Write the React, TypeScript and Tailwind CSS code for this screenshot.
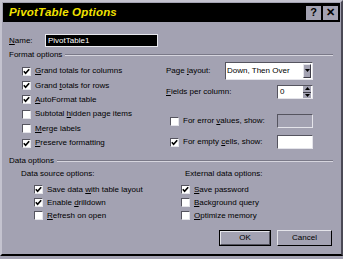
import React from "react";

function U({ children }: { children: React.ReactNode }) {
  return <span className="underline underline-offset-[1px]">{children}</span>;
}

function Box({ checked }: { checked?: boolean }) {
  return (
    <span className="flex h-[9px] w-[9px] shrink-0 items-center justify-center border-t border-l border-t-[#55545f] border-l-[#55545f] border-b border-r border-b-[#e4e4ea] border-r-[#e4e4ea] bg-white">
      {checked && (
        <svg width="7" height="7" viewBox="0 0 7 7">
          <path d="M0.8 3.2 L2.6 5.2 L6.2 1.2" fill="none" stroke="#000" strokeWidth="1.6" />
        </svg>
      )}
    </span>
  );
}

function Check({ checked, children, h = "h-[14.4px]" }: { checked?: boolean; children: React.ReactNode; h?: string }) {
  return (
    <div className={`flex items-center gap-[4px] ${h}`}>
      <Box checked={checked} />
      <span>{children}</span>
    </div>
  );
}

function Sunken({ className, children }: { className: string; children?: React.ReactNode }) {
  return (
    <div className={`border-t border-l border-t-[#55545f] border-l-[#55545f] border-b border-r border-b-[#e4e4ea] border-r-[#e4e4ea] ${className}`}>
      {children}
    </div>
  );
}

function Header({ label, className }: { label: string; className: string }) {
  return (
    <div className={`flex h-[10px] items-center pl-[7px] pr-[8px] ${className}`}>
      <span className="pr-[3px]">{label}</span>
      <div className="flex-1 border-t border-b border-t-[#7a7988] border-b-[#d6d5de]" />
    </div>
  );
}

export default function App() {
  return (
    <div className="h-[259px] w-[343px] overflow-hidden bg-[#a3a2b2] font-['Liberation_Sans',Arial,sans-serif] text-[8px] leading-none text-black">
      <div className="h-[256px] border-l-2 border-t-2 border-r-2 border-b-2 border-l-[#c4c3cf] border-t-[#c4c3cf] border-r-[#4a4955] border-b-black">
        {/* title bar */}
        <div className="mx-[1px] mt-[1px] flex h-[19px] items-center bg-black pl-[6px] pr-[2px]">
          <span className="text-[11.5px] font-bold italic tracking-[0.2px] text-[#f2e200]">PivotTable Options</span>
          <div className="ml-auto flex gap-[2px]">
            <span className="flex h-[14px] w-[15px] items-center justify-center bg-[#a3a2b2] text-[11px] font-bold">?</span>
            <span className="flex h-[14px] w-[15px] items-center justify-center bg-[#a3a2b2] text-[11px] font-bold">✕</span>
          </div>
        </div>

        {/* name */}
        <div className="mt-[12px] flex h-[13px] items-center">
          <span className="w-[43px] pl-[7px]">
            <U>N</U>ame:
          </span>
          <div className="flex h-[13px] w-[113px] items-center border border-[#e8e8ee] bg-black pl-[2px] text-white">PivotTable1</div>
        </div>

        <Header label="Format options" className="mt-[3px]" />

        <div className="mt-[1px] flex h-[90px]">
          <div className="w-[164px] pl-[20px] pt-[3px]">
            <Check checked>
              <U>G</U>rand totals for columns
            </Check>
            <Check checked>
              Grand <U>t</U>otals for rows
            </Check>
            <Check checked>
              <U>A</U>utoFormat table
            </Check>
            <Check>
              Subtotal <U>h</U>idden page items
            </Check>
            <Check>
              <U>M</U>erge labels
            </Check>
            <Check checked>
              <U>P</U>reserve formatting
            </Check>
          </div>
          <div className="flex-1">
            <div className="flex h-[19px] items-center">
              <span className="w-[59px]">
                Page <U>l</U>ayout:
              </span>
              <Sunken className="flex h-[18px] w-[88px] items-center bg-white pl-[1px] pr-[1px]">
                <span className="flex-1">Down, Then Over</span>
                <span className="flex h-[14px] w-[8px] items-center justify-center border-t border-l border-[#e4e4ea] border-r border-b border-r-[#3c3b46] border-b-[#3c3b46] bg-[#a3a2b2]">
                  <svg width="5" height="3" viewBox="0 0 5 3">
                    <path d="M0 0 H5 L2.5 3 Z" fill="#000" />
                  </svg>
                </span>
              </Sunken>
            </div>
            <div className="mt-[5px] flex h-[14px] items-center">
              <span className="w-[111px]">
                <U>F</U>ields per column:
              </span>
              <Sunken className="flex h-[14px] w-[36px] items-center bg-white pl-[2px] pr-[1px]">
                <span className="flex-1">0</span>
                <span className="flex h-[12px] w-[8px] flex-col">
                  <span className="flex flex-1 items-center justify-center border-b border-b-[#3c3b46] bg-[#a3a2b2]">
                    <svg width="5" height="3" viewBox="0 0 5 3">
                      <path d="M0 3 H5 L2.5 0 Z" fill="#000" />
                    </svg>
                  </span>
                  <span className="flex flex-1 items-center justify-center bg-[#a3a2b2]">
                    <svg width="5" height="3" viewBox="0 0 5 3">
                      <path d="M0 0 H5 L2.5 3 Z" fill="#000" />
                    </svg>
                  </span>
                </span>
              </Sunken>
            </div>
            <div className="mt-[15px] flex h-[14px] items-center pl-[4px]">
              <div className="w-[107px]">
                <Check h="h-[14px]">
                  For error <U>v</U>alues, show:
                </Check>
              </div>
              <Sunken className="h-[14px] w-[36px] bg-[#a3a2b2]" />
            </div>
            <div className="mt-[7px] flex h-[14px] items-center pl-[4px]">
              <div className="w-[107px]">
                <Check checked h="h-[14px]">
                  For empty <U>c</U>ells, show:
                </Check>
              </div>
              <Sunken className="h-[14px] w-[36px] bg-white" />
            </div>
          </div>
        </div>

        <Header label="Data options" className="mt-[5px]" />

        <div className="mt-[3px] flex">
          <div className="w-[164px] pl-[19px]">
            <div className="flex h-[10px] items-center">Data source options:</div>
            <div className="mt-[4px] pl-[13px]">
              <Check checked h="h-[13px]">
                Save data <U>w</U>ith table layout
              </Check>
              <Check checked h="h-[13px]">
                Enable <U>d</U>rilldown
              </Check>
              <Check h="h-[13px]">
                <U>R</U>efresh on open
              </Check>
            </div>
          </div>
          <div className="flex-1 pl-[19px]">
            <div className="flex h-[10px] items-center">External data options:</div>
            <div className="mt-[4px] -ml-[4px]">
              <Check checked h="h-[13px]">
                <U>S</U>ave password
              </Check>
              <Check h="h-[13px]">
                <U>B</U>ackground query
              </Check>
              <Check h="h-[13px]">
                <U>O</U>ptimize memory
              </Check>
            </div>
          </div>
        </div>

        <div className="mt-[8px] flex justify-end gap-[6px] pr-[9px]">
          <div className="flex h-[16px] w-[52px] items-center justify-center border border-black">
            <div className="flex h-full w-full items-center justify-center border-t border-l border-t-[#e4e4ea] border-l-[#e4e4ea] border-r border-b border-r-[#55545f] border-b-[#55545f]">
              OK
            </div>
          </div>
          <div className="flex h-[16px] w-[55px] items-center justify-center border-t border-l border-t-[#e4e4ea] border-l-[#e4e4ea] border-r border-b border-r-black border-b-black">
            Cancel
          </div>
        </div>
      </div>
    </div>
  );
}
